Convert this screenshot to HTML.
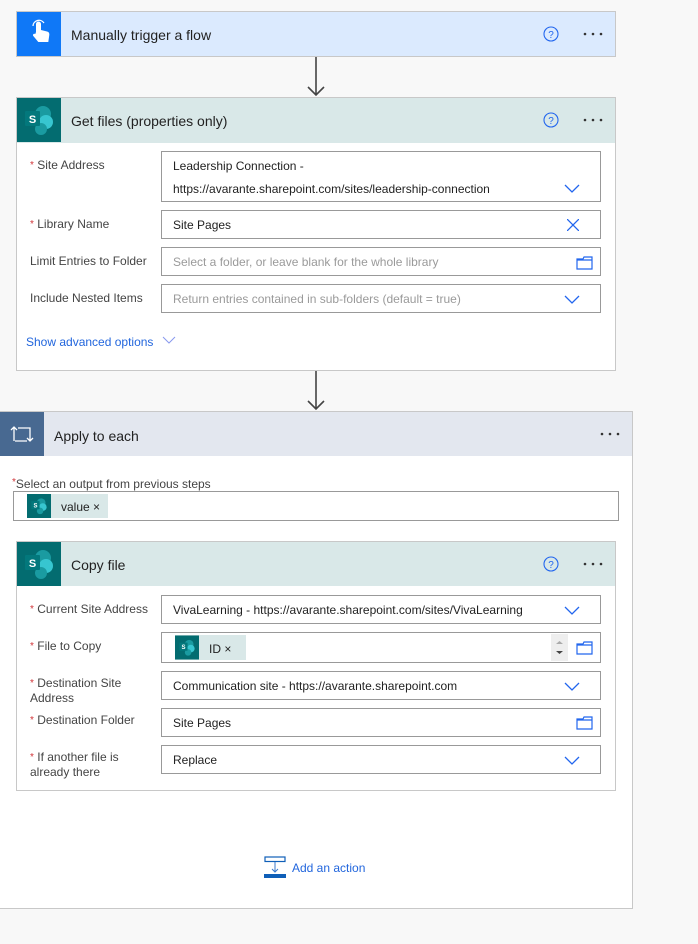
<!DOCTYPE html><html><head><style>
*{box-sizing:border-box;margin:0;padding:0}
body{width:698px;height:944px;background:#f8f8f8;position:relative;font-family:"Liberation Sans",sans-serif;overflow:hidden;color:#222}
.a{position:absolute}
.card{position:absolute;background:#fff;border:1px solid #c8c8c8}
.hdr{position:absolute;left:0;right:0;top:0;height:45px}
.ico{position:absolute;left:0;top:0;width:44px;height:44px}
.title{position:absolute;left:54px;top:15px;font-size:14px;color:#222}
.lbl{position:absolute;left:13px;font-size:12px;color:#444;line-height:15px}
.lbl b{color:#d13438;font-weight:normal;font-size:10px;vertical-align:top}
.inp{position:absolute;left:144px;width:440px;border:1px solid #999;background:#fff;font-size:12px;padding-left:11px;line-height:28px}
.ph{color:#9a9a9a}
.chev{position:absolute;right:20px;top:9px}
.q{position:absolute;right:56px;top:14px}
.dots{position:absolute;right:12px;top:20px}
</style></head><body>
<svg width="0" height="0" style="position:absolute"><defs>
<g id="sp"><rect width="44" height="44" fill="#036c70"/><circle cx="26" cy="16" r="8" fill="#1a9ba1"/><circle cx="29" cy="24" r="7" fill="#37c6d0"/><circle cx="24" cy="31" r="6" fill="#1a9ba1"/><rect x="8" y="13" width="15" height="15" rx="1" fill="#03787c"/><text x="15.5" y="25" font-size="11" font-weight="bold" fill="#fff" text-anchor="middle" font-family="Liberation Sans">S</text></g>
<g id="chev"><path d="M1 1l7 7 7-7" fill="none" stroke="#2266ee" stroke-width="1.3"/></g>
<g id="fold"><path d="M1 4h6l1-2h8v12H1z M1 5h15" fill="none" stroke="#2266ee" stroke-width="1.2"/></g>
<g id="q"><circle cx="8" cy="8" r="7" fill="none" stroke="#2266ee" stroke-width="1.1"/><text x="8" y="12" font-size="10" fill="#2266ee" text-anchor="middle" font-family="Liberation Sans">?</text></g>
<g id="dots"><circle cx="2" cy="2" r="1.3" fill="#333"/><circle cx="10" cy="2" r="1.3" fill="#333"/><circle cx="18" cy="2" r="1.3" fill="#333"/></g>
</defs></svg>

<!-- trigger -->
<div class="card" style="left:16px;top:11px;width:600px;height:46px;background:#dbeafe">
<div class="ico" style="background:#0f78f7"><svg width="44" height="44"><path d="M19 20 v-8 a2.5 2.5 0 0 1 5 0 v6 l6 1.5 c2 .5 2.5 2 2.3 3.5 l-1 7 h-10 l-5-6 c-1-1.2 .5-3 2-2z" fill="#fff"/><path d="M16 14a6 6 0 0 1 11-3" fill="none" stroke="#fff" stroke-width="1.3"/></svg></div>
<div class="title">Manually trigger a flow</div>
<svg class="q" width="16" height="16"><use href="#q"/></svg>
<svg class="dots" width="20" height="4"><use href="#dots"/></svg>
</div>
<svg class="a" style="left:306px;top:57px" width="20" height="40"><path d="M10 0v38M2 30l8 8 8-8" fill="none" stroke="#444" stroke-width="1.6"/></svg>

<!-- get files -->
<div class="card" style="left:16px;top:97px;width:600px;height:274px">
<div class="hdr" style="background:#d9e8e8"></div>
<svg class="ico" width="44" height="44"><use href="#sp"/></svg>
<div class="title">Get files (properties only)</div>
<svg class="q" width="16" height="16"><use href="#q"/></svg>
<svg class="dots" width="20" height="4"><use href="#dots"/></svg>
<div class="lbl" style="top:60px"><b>*</b> Site Address</div>
<div class="inp" style="top:53px;height:51px;line-height:23px;padding-top:3px">Leadership Connection -<br>https://avarante.sharepoint.com/sites/leadership-connection<svg class="chev" style="top:32px" width="16" height="10"><use href="#chev"/></svg></div>
<div class="lbl" style="top:119px"><b>*</b> Library Name</div>
<div class="inp" style="top:112px;height:29px">Site Pages<svg class="a" style="right:21px;top:8px" width="12" height="12"><path d="M0 0l12 12M12 0L0 12" stroke="#2266ee" stroke-width="1.3"/></svg></div>
<div class="lbl" style="top:156px">Limit Entries to Folder</div>
<div class="inp ph" style="top:149px;height:29px">Select a folder, or leave blank for the whole library<svg class="a" style="right:6px;top:7px" width="18" height="15"><use href="#fold"/></svg></div>
<div class="lbl" style="top:193px">Include Nested Items</div>
<div class="inp ph" style="top:186px;height:29px">Return entries contained in sub-folders (default = true)<svg class="chev" style="top:10px" width="16" height="10"><use href="#chev"/></svg></div>
<div class="a" style="left:9px;top:237px;font-size:12px;color:#2266dd">Show advanced options</div>
<svg class="a" style="left:145px;top:238px" width="14" height="8"><path d="M1 1l6 6 6-6" fill="none" stroke="#8899ee" stroke-width="1"/></svg>
</div>
<svg class="a" style="left:306px;top:371px" width="20" height="40"><path d="M10 0v38M2 30l8 8 8-8" fill="none" stroke="#444" stroke-width="1.6"/></svg>

<!-- apply to each -->
<div class="card" style="left:0;top:411px;width:633px;height:498px;border-left:none">
<div class="hdr" style="height:44px;background:#e3e7ef"></div>
<div class="ico" style="background:#486991"><svg width="44" height="44"><path d="M14 29V15M11 18l3-3 3 3M18 16h12v13M27 26l3 3 3-3M27 29H15" fill="none" stroke="#fff" stroke-width="1.3"/></svg></div>
<div class="title" style="top:16px">Apply to each</div>
<svg class="dots" style="right:12px" width="20" height="4"><use href="#dots"/></svg>
<div class="a" style="left:12px;top:65px;font-size:12px;color:#444"><span style="color:#d13438;font-size:10px;vertical-align:top">*</span>Select an output from previous steps</div>
<div class="a" style="left:13px;top:79px;width:606px;height:30px;border:1px solid #999">
<div class="a" style="left:13px;top:2px;height:24px;width:81px;background:#d9e8e8"><svg class="a" width="24" height="24" viewBox="0 0 44 44"><use href="#sp"/></svg><span class="a" style="left:34px;top:6px;font-size:12px">value ×</span></div></div>

<div class="card" style="left:16px;top:129px;width:600px;height:250px">
<div class="hdr" style="background:#d9e8e8;height:44px"></div>
<svg class="ico" width="44" height="44"><use href="#sp"/></svg>
<div class="title">Copy file</div>
<svg class="q" width="16" height="16"><use href="#q"/></svg>
<svg class="dots" width="20" height="4"><use href="#dots"/></svg>
<div class="lbl" style="top:60px"><b>*</b> Current Site Address</div>
<div class="inp" style="top:53px;height:29px">VivaLearning - https://avarante.sharepoint.com/sites/VivaLearning<svg class="chev" style="top:10px" width="16" height="10"><use href="#chev"/></svg></div>
<div class="lbl" style="top:97px"><b>*</b> File to Copy</div>
<div class="inp" style="top:90px;height:31px">
<div class="a" style="left:13px;top:2px;height:25px;width:71px;background:#d9e8e8"><svg class="a" width="24" height="25" viewBox="0 0 44 44"><use href="#sp"/></svg><span class="a" style="left:34px;top:7px;font-size:12px;line-height:14px">ID ×</span></div>
<div class="a" style="right:32px;top:1px;width:17px;height:27px;background:#eee"><svg width="17" height="27"><path d="M5 10l3.5-3 3.5 3z" fill="#aaa"/><path d="M5 17l3.5 3 3.5-3z" fill="#444"/></svg></div>
<svg class="a" style="right:6px;top:7px" width="18" height="15"><use href="#fold"/></svg></div>
<div class="lbl" style="top:134px"><b>*</b> Destination Site<br>Address</div>
<div class="inp" style="top:129px;height:29px">Communication site - https://avarante.sharepoint.com<svg class="chev" style="top:10px" width="16" height="10"><use href="#chev"/></svg></div>
<div class="lbl" style="top:171px"><b>*</b> Destination Folder</div>
<div class="inp" style="top:166px;height:29px">Site Pages<svg class="a" style="right:6px;top:6px" width="18" height="15"><use href="#fold"/></svg></div>
<div class="lbl" style="top:208px"><b>*</b> If another file is<br>already there</div>
<div class="inp" style="top:203px;height:29px">Replace<svg class="chev" style="top:10px" width="16" height="10"><use href="#chev"/></svg></div>
</div>

<svg class="a" style="left:264px;top:444px" width="22" height="22"><rect x="1" y="1" width="20" height="4.5" fill="none" stroke="#0f5fb8" stroke-width="1.2"/><path d="M11 6v10M8 13l3 3 3-3" fill="none" stroke="#3a7acc" stroke-width="1"/><rect x="0" y="18" width="22" height="4" fill="#0f5fb8"/></svg>
<div class="a" style="left:292px;top:449px;font-size:12px;color:#2266dd">Add an action</div>
</div>
</body></html>
